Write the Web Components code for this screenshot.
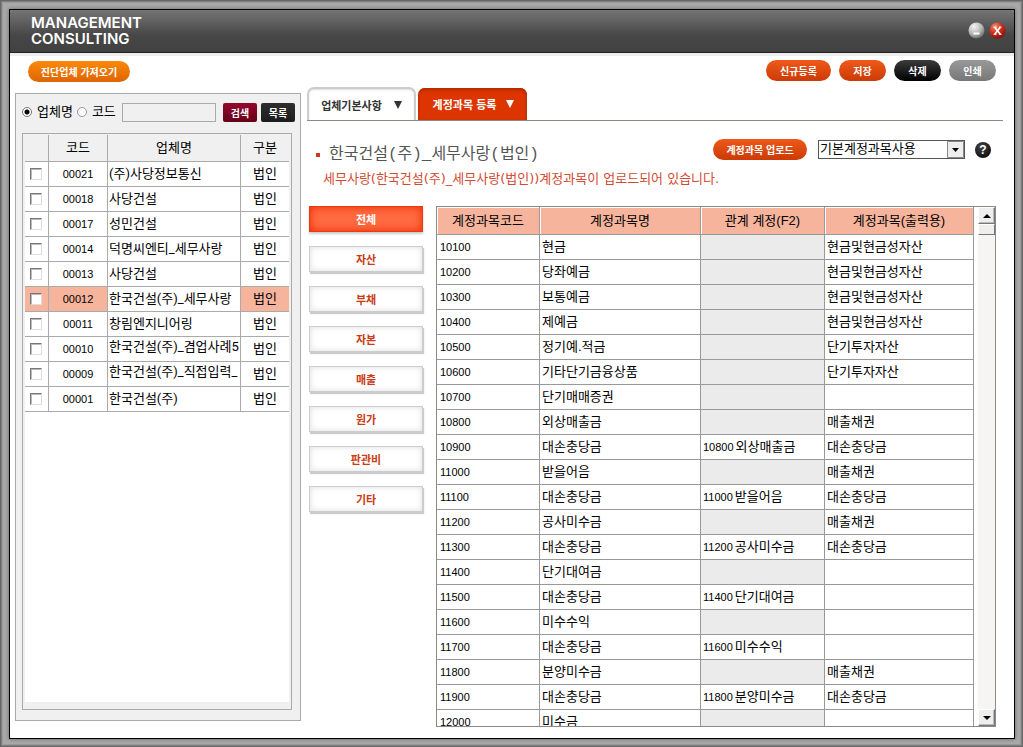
<!DOCTYPE html>
<html lang="ko">
<head>
<meta charset="utf-8">
<title>Management Consulting</title>
<style>
html, body { margin: 0; height: 100%; }
body { font: 13px/20px "Liberation Sans", "Noto Sans CJK KR", sans-serif; color: #000; }
</style>
</head>
<body>
<consulting-window></consulting-window>

<script>
const define = (name, html, setup) => {
  const template = document.createElement('template');
  template.innerHTML = html;
  customElements.define(name, class extends HTMLElement {
    constructor() {
      super();
      this.attachShadow({ mode: 'open' }).append(template.content.cloneNode(true));
    }
    connectedCallback() {
      if (setup && !this.ready) { this.ready = true; setup(this, this.shadowRoot); }
    }
  });
};

/* Pill-shaped command button; tone is set with the "tone" attribute. */
define('pill-button', `
<style>
:host { display: block; --a: #ee5a1a; --b: #cc3a06; }
:host([tone=amber]) { --a: #f98a0c; --b: #df6400; }
:host([tone=black]) { --a: #3c3c3c; --b: #000; }
:host([tone=grey]) { --a: #999; --b: #777; }
button { display: block; width: 100%; height: 21px; margin: 0; padding: 0; border: 0; border-radius: 11px;
  background: linear-gradient(var(--a), var(--b)); color: #fff; font: bold 10px/20px "Noto Sans CJK KR", sans-serif;
  white-space: nowrap; cursor: pointer; }
</style>
<button type="button"><slot></slot></button>`);

/* Small square button beside the search field. */
define('square-button', `
<style>
:host { display: block; width: 34px; --a: #94072f; --b: #660018; }
:host([tone=dark]) { --a: #2e2e2e; --b: #1c1c1c; }
button { display: block; width: 100%; height: 19px; margin: 0; padding: 0; border: 0; border-radius: 2px;
  background: linear-gradient(var(--a), var(--b)); color: #fff; font: bold 10px/18px "Noto Sans CJK KR", sans-serif; cursor: pointer; }
</style>
<button type="button"><slot></slot></button>`);

define('title-bar', `
<style>
:host { display: flex; flex: none; justify-content: space-between; align-items: flex-start; height: 43px; box-sizing: border-box;
  padding: 6px 8px 0 21px; background: linear-gradient(#757575, #474747 60%, #414141); border-bottom: 1px solid #222; }
h1 { display: grid; gap: 2px; margin: 0; color: #fff; font: 600 15px/14px Inter, sans-serif; }
.controls { display: flex; gap: 4px; padding-top: 6px; }
button { width: 17px; height: 17px; padding: 0; border: 0; background: none; }
svg { display: block; }
</style>
<h1><span>MANAGEMENT</span><span>CONSULTING</span></h1>
<div class="controls">
<button type="button" aria-label="최소화"><svg width="17" height="17" viewBox="0 0 17 17">
<defs><radialGradient id="g" cx=".35" cy=".25" r=".8"><stop offset="0" stop-color="#f4f4f4"/><stop offset=".6" stop-color="#b4b4b4"/><stop offset="1" stop-color="#666"/></radialGradient></defs>
<circle cx="8.5" cy="8.5" r="8" fill="url(#g)"/><path d="M5.5 10.5h6v2h-6z" fill="#fff"/></svg></button>
<button type="button" aria-label="닫기"><svg width="17" height="17" viewBox="0 0 17 17">
<defs><radialGradient id="r" cx=".35" cy=".25" r=".8"><stop offset="0" stop-color="#f2917c"/><stop offset=".5" stop-color="#d2301a"/><stop offset="1" stop-color="#8a0c04"/></radialGradient></defs>
<circle cx="8.5" cy="8.5" r="8" fill="url(#r)"/><path d="M5.7 5.2l5.6 7M11.3 5.2l-5.6 7" stroke="#fff" stroke-width="1.6"/><path d="M4.5 5.1h3M10 5.1h2.5M4.5 12.3h3M10 12.3h2.5" stroke="#fff"/></svg></button>
</div>`);

define('company-search', `
<style>
:host { display: flex; align-items: center; height: 37px; padding-right: 5px; }
label { display: flex; align-items: center; white-space: nowrap; margin-right: 4px; line-height: 18px; padding-bottom: 2px; }
input[type=radio] { appearance: none; width: 10px; height: 10px; margin: 0 5px 0 0; border: 1px solid #999; border-radius: 50%; background: #fff; }
input[type=radio]:checked { border-color: #777; background: radial-gradient(circle, #000 2px, #fff 3px); }
input[type=text] { flex: 1; min-width: 0; height: 19px; box-sizing: border-box; margin: 0 7px 0 2px; padding: 0 3px;
  border: 1px solid #aaa; background: #f0f0f0; font: inherit; }
square-button + square-button { margin-left: 4px; }
</style>
<label><input type="radio" name="by" checked>업체명</label>
<label><input type="radio" name="by">코드</label>
<input type="text" aria-label="검색어">
<square-button>검색</square-button>
<square-button tone="dark">목록</square-button>`);

const companies = [
  ['00021', '(주)사당정보통신'], ['00018', '사당건설'], ['00017', '성민건설'], ['00014', '덕명씨엔티_세무사랑'],
  ['00013', '사당건설'], ['00012', '한국건설(주)_세무사랑'], ['00011', '창림엔지니어링'],
  ['00010', '한국건설(주)_겸업사례5'], ['00009', '한국건설(주)_직접입력_'], ['00001', '한국건설(주)']
];

define('company-list', `
<style>
:host { display: flex; flex-direction: column; flex: 1; min-height: 0; box-sizing: border-box; border: 1px solid #aaa; padding: 1px 2px 7px; background: #f0f0f0; }
.sheet { flex: 1; min-height: 0; overflow: hidden; background: #fff; }
table { width: 100%; table-layout: fixed; border-collapse: separate; border-spacing: 0; }
th, td { box-sizing: border-box; padding: 0; text-align: center; font-weight: normal; white-space: nowrap;
  border-bottom: 1px solid #aaa; border-right: 1px solid #aaa; }
th:last-child, td:last-child { border-right: 0; }
th { height: 27px; background: #f0f0f0; }
td { height: 25px; background: #fff; padding-bottom: 1px; line-height: 18px; }
td.code { font-size: 11px; }
td.name { text-align: left; padding-left: 1px; font-family: Roboto, "Noto Sans CJK KR", sans-serif; }
td.name.long { padding-bottom: 5px; }
tr.selected td:not(.name) { background: #f6b49c; }
.box { width: 24px; } .code { width: 59px; } .kind { width: 48px; }
input { display: block; appearance: none; box-sizing: border-box; width: 12px; height: 12px; margin: 0 auto 0 5px; background: #fff;
  border: 1px solid; border-color: #777 #ddd #ddd #777; box-shadow: inset 1px 1px #bbb; }
</style>
<div class="sheet"><table>
<thead><tr><th class="box" aria-label="선택"></th><th class="code">코드</th><th>업체명</th><th class="kind">구분</th></tr></thead>
<tbody></tbody></table></div>`, (host, root) => {
  root.querySelector('tbody').innerHTML = companies.map(([code, name]) => `
<tr${code === '00012' ? ' class="selected"' : ''}><td><input type="checkbox" aria-label="${name}"></td><td class="code">${code}</td>
<td class="name${name.length > 12 ? ' long' : ''}">${name}</td><td>법인</td></tr>`).join('');
});

define('page-tabs', `
<style>
:host { display: flex; align-items: flex-end; gap: 2px; height: 34px; box-sizing: border-box; border-bottom: 1px solid #8c8a82; }
button { display: flex; align-items: center; justify-content: center; gap: 12px; box-sizing: border-box; width: 109px; height: 33px; margin: 0; padding: 0;
  border: 2px solid #ccc; border-bottom: 0; border-radius: 7px 7px 0 0; background: #fff; color: #333;
  box-shadow: inset 0 1px 2px #ddd; font: bold 11px/20px "Noto Sans CJK KR", sans-serif; white-space: nowrap; }
button[aria-selected=true] { gap: 10px; height: 32px; padding-left: 2px; border: 0; background: #dd3500; color: #fff; box-shadow: inset 0 2px 3px #b02a00, inset -1px 0 2px #b83a18; }
svg { fill: currentColor; }
</style>
<button type="button" role="tab" aria-selected="false">업체기본사항<svg width="8" height="8"><path d="M0 0h8L4 8z"/></svg></button>
<button type="button" role="tab" aria-selected="true">계정과목 등록<svg width="8" height="8"><path d="M0 0h8L4 8z"/></svg></button>`);

define('account-heading', `
<style>
:host { display: block; padding: 18px 12px 15px 9px; white-space: nowrap; }
header { display: flex; justify-content: space-between; align-items: flex-start; height: 28px; }
h2 { display: flex; align-items: center; gap: 9px; margin: 0; padding-top: 4px; color: #555; font: 16px/24px "Liberation Mono", "Noto Sans CJK KR", monospace; }
h2::before { content: ""; width: 4px; height: 4px; background: #cc3a14; }
p { margin: 0; padding-left: 7px; color: #d24a32; font: 13px/24px "DejaVu Sans", "Noto Sans CJK KR", sans-serif; }
.tools { display: flex; align-items: center; }
pill-button { width: 94px; }
.select { position: relative; margin: 0 10px 0 11px; }
select { display: block; appearance: none; box-sizing: border-box; width: 147px; height: 19px; margin: 0; padding: 0 18px 2px 1px;
  border: 1px solid #555; border-radius: 0; background: #fff; color: #000; font: 13px/16px "Liberation Sans", "Noto Sans CJK KR", sans-serif; }
.select svg { position: absolute; top: 1px; right: 1px; pointer-events: none; }
.help { width: 16px; height: 16px; padding: 0; border: 0; border-radius: 50%; background: radial-gradient(circle at 40% 30%, #444, #000);
  color: #fff; font: bold 12px/16px "Liberation Sans", sans-serif; }
</style>
<header><h2>한국건설(주)_세무사랑(법인)</h2>
<div class="tools"><pill-button>계정과목 업로드</pill-button>
<div class="select"><select aria-label="계정과목 사용"><option>기본계정과목사용</option></select>
<svg width="17" height="17"><path d="M.5.5h16v16H.5z" fill="#eee" stroke="#888"/><path d="M5 7h7l-3.5 4z"/></svg></div>
<button class="help" type="button" aria-label="도움말">?</button></div></header>
<p>세무사랑(한국건설(주)_세무사랑(법인))계정과목이 업로드되어 있습니다.</p>`);

define('category-menu', `
<style>
:host { display: flex; flex: none; flex-direction: column; gap: 14px; width: 114px; }
button { height: 26px; box-sizing: border-box; margin: 0; padding: 0; border: 1px solid #ccc; background: #fff;
  box-shadow: 1px 2px 1px #ccc, inset 0 0 6px #ddd; color: #cc3a14; font: bold 11px/22px "Noto Sans CJK KR", sans-serif; }
button[aria-pressed=true] { border-color: #ea3a10; background: #ff6a40; color: #fff; box-shadow: 0 2px 2px #ccc, inset 0 0 9px #ee2a00; }
</style>
`, (host, root) => {
  for (const name of ['전체', '자산', '부채', '자본', '매출', '원가', '판관비', '기타']) {
    const button = document.createElement('button');
    button.type = 'button';
    button.textContent = name;
    button.setAttribute('aria-pressed', name === '전체');
    root.append(button);
  }
});

/* code, name, related code, related name, printed name */
const accounts = [
  ['10100', '현금', '', '', '현금및현금성자산'], ['10200', '당좌예금', '', '', '현금및현금성자산'],
  ['10300', '보통예금', '', '', '현금및현금성자산'], ['10400', '제예금', '', '', '현금및현금성자산'],
  ['10500', '정기예.적금', '', '', '단기투자자산'], ['10600', '기타단기금융상품', '', '', '단기투자자산'],
  ['10700', '단기매매증권', '', '', ''], ['10800', '외상매출금', '', '', '매출채권'],
  ['10900', '대손충당금', '10800', '외상매출금', '대손충당금'], ['11000', '받을어음', '', '', '매출채권'],
  ['11100', '대손충당금', '11000', '받을어음', '대손충당금'], ['11200', '공사미수금', '', '', '매출채권'],
  ['11300', '대손충당금', '11200', '공사미수금', '대손충당금'], ['11400', '단기대여금', '', '', ''],
  ['11500', '대손충당금', '11400', '단기대여금', ''], ['11600', '미수수익', '', '', ''],
  ['11700', '대손충당금', '11600', '미수수익', ''], ['11800', '분양미수금', '', '', '매출채권'],
  ['11900', '대손충당금', '11800', '분양미수금', '대손충당금'], ['12000', '미수금', '', '', '']
];

define('account-table', `
<style>
:host { display: flex; flex: 1; min-width: 0; min-height: 0; box-sizing: border-box; border: 1px solid #8c8a82; }
.sheet { flex: 1; min-width: 0; overflow: hidden; border-right: 1px solid #999; }
table { width: 100%; table-layout: fixed; border-collapse: separate; border-spacing: 0; }
th, td { box-sizing: border-box; font-weight: normal; white-space: nowrap; border-right: 1px solid #999; border-bottom: 1px solid #999; }
th:last-child, td:last-child { border-right: 0; }
th { height: 28px; padding: 0; background: #f6b49c; box-shadow: inset 1px 1px #fff; }
td { height: 25px; padding: 0 0 1px 2px; }
td:first-child { padding-left: 3px; }
td:first-child, td span { font-size: 11px; }
td span { margin-right: 2px; }
td.off { background: #ebebeb; }
.c1 { width: 103px; } .c2 { width: 161px; } .c3 { width: 124px; }
.bar { display: flex; flex-direction: column; width: 17px; margin-left: 4px; background: #f6f5f3; }
.bar button { display: grid; place-items: center; width: 17px; height: 17px; box-sizing: border-box; margin: 0; padding: 0;
  border: 1px solid; border-color: #fff #777 #777 #fff; background: #eee; box-shadow: inset -1px -1px #bbb; }
.thumb { height: 11px; box-sizing: border-box; border: 1px solid; border-color: #fff #777 #777 #fff; background: #eee; }
.track { flex: 1; }
</style>
<div class="sheet"><table>
<thead><tr><th class="c1">계정과목코드</th><th class="c2">계정과목명</th><th class="c3">관계 계정(F2)</th><th>계정과목(출력용)</th></tr></thead>
<tbody></tbody></table></div>
<div class="bar">
<button type="button" aria-label="위로"><svg width="8" height="4"><path d="M0 4h8L4 0z"/></svg></button>
<div class="thumb"></div><div class="track"></div>
<button type="button" aria-label="아래로"><svg width="8" height="4"><path d="M0 0h8L4 4z"/></svg></button>
</div>`, (host, root) => {
  root.querySelector('tbody').innerHTML = accounts.map(([code, name, relCode, relName, print]) =>
    `<tr><td>${code}</td><td>${name}</td>${relCode ? `<td><span>${relCode}</span>${relName}</td>` : '<td class="off"></td>'}<td>${print}</td></tr>`).join('');
});

define('consulting-window', `
<style>
:host { display: flex; box-sizing: border-box; height: 100vh; min-height: 500px; padding: 9px 8px 8px 9px;
  background: #a9a9a9; box-shadow: inset 0 0 0 1px #666, inset 0 0 0 2px #808080, inset 0 0 0 3px #999; }
.frame { display: flex; flex: 1; min-width: 0; flex-direction: column; border: 1px solid #000; background: #fff; box-shadow: 0 0 4px #666; }
main { display: flex; flex: 1; min-height: 0; gap: 6px; padding: 0 11px 11px 5px; border-top: 3px solid #eee; }
aside { display: flex; flex: none; flex-direction: column; width: 286px; padding: 5px 0 6px; box-sizing: border-box; }
aside > pill-button { width: 102px; margin: 0 0 11px 13px; }
.panel { display: flex; flex: 1; min-height: 0; flex-direction: column; padding: 0 0 10px 6px; border: 1px solid #aaa; background: #f0f0f0; }
company-search { margin-bottom: 2px; }
company-list { margin-right: 8px; }
section { display: flex; flex: 1; min-width: 0; flex-direction: column; }
.actions { display: flex; justify-content: flex-end; gap: 8px; padding: 4px 7px 6px 0; }
.actions pill-button { width: 47px; }
.actions pill-button:first-child { width: 65px; }
.content { display: flex; flex: 1; min-height: 0; gap: 13px; padding: 0 7px 0 2px; }
</style>
<div class="frame">
<title-bar></title-bar>
<main>
<aside><pill-button tone="amber">진단업체 가져오기</pill-button>
<div class="panel"><company-search></company-search><company-list></company-list></div></aside>
<section>
<div class="actions"><pill-button>신규등록</pill-button><pill-button>저장</pill-button><pill-button tone="black">삭제</pill-button><pill-button tone="grey">인쇄</pill-button></div>
<page-tabs role="tablist"></page-tabs>
<account-heading></account-heading>
<div class="content"><category-menu></category-menu><account-table></account-table></div>
</section>
</main>
</div>`);
</script>
</body>
</html>
